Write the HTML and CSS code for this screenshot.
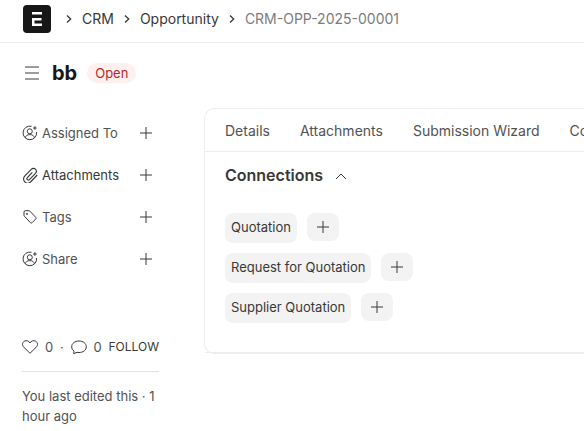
FILE: index.html
```html
<!DOCTYPE html>
<html lang="en">

<head>
    <meta charset="utf-8">
    <meta name="viewport" content="width=device-width, initial-scale=1.0">
    <title>CRM-OPP-2025-00001</title>
    <link rel="stylesheet" href="styles.css">
</head>

<body>
    <!-- shared icons -->
    <svg class="sprite" aria-hidden="true">
        <symbol id="icon-plus" viewBox="0 0 12 12">
            <path d="M6 0v12M0 6h12" />
        </symbol>
        <symbol id="icon-right" viewBox="0 0 6 8">
            <path d="M1 .5L4.700 4 1 7.500" />
        </symbol>
        <symbol id="icon-assign" viewBox="0 0 16 16">
            <path d="M9.500 1.300A6.800 6.800 0 1 0 14.600 7M12.900 1.200v3.600M11.100 3h3.600" />
            <circle cx="7.800" cy="6.300" r="2.500" />
            <path d="M3.300 12.800c.5-2.200 2-3.200 4.500-3.200s4.100 1 4.600 3.200" />
        </symbol>
        <symbol id="icon-clip" viewBox="0.500 0.500 14 14">
            <path d="M13.800 7.500l-5.400 5.700c-1.500 1.600-3.900 1.700-5.400.3s-1.500-3.700 0-5.200l5.600-5.800c1-1 2.600-1.100 3.600-.1s1.100 2.500.1 3.600l-5.300 5.500c-.5.5-1.300.6-1.800.1s-.5-1.300 0-1.800l4.300-4.600" />
        </symbol>
        <symbol id="icon-tag" viewBox="0 0 16 16">
            <path d="M2 6V3c0-.8.5-1.300 1.300-1.300h3.500c.4 0 .7.100 1 .4l5.900 6.200c.5.5.5 1.200 0 1.700l-3.600 3.700c-.5.5-1.200.5-1.700 0L2.400 7.200C2.100 6.900 2 6.500 2 6z" />
            <circle cx="5" cy="4.900" r=".6" />
        </symbol>
        <symbol id="icon-heart" viewBox="0 0 16 16">
            <path d="M8 14.300L1.500 7.800C-.2 6 .4 3.100 2.500 2.100 4.500 1.200 6.900 1.800 8 4c1.100-2.200 3.500-2.800 5.500-1.900 2.100 1 2.700 3.900 1 5.700z" />
        </symbol>
        <symbol id="icon-comment" viewBox="0 0 16 16">
            <path d="M3 12.100C1.400 11 .7 9.500.7 7.800.7 4.400 3.800 2 8 2s7.300 2.400 7.300 5.800-3.100 5.700-7.300 5.700c-.7 0-1.400-.1-2-.2l-3.200 1.400z" />
        </symbol>
    </svg>

    <header class="navbar">
        <a class="logo" href="#" aria-label="Home">
            <svg viewBox="0 0 28 28">
                <path d="M9 8.250h10M9 14.250h9.500M10.250 14v6M9 19.750h10" />
            </svg>
        </a>
        <nav class="breadcrumb">
            <svg class="sep"><use href="#icon-right" /></svg>
            <a href="#">CRM</a>
            <svg class="sep"><use href="#icon-right" /></svg>
            <a href="#">Opportunity</a>
            <svg class="sep"><use href="#icon-right" /></svg>
            <a class="current" href="#">CRM-OPP-2025-00001</a>
        </nav>
    </header>

    <div class="page-head">
        <button class="menu-btn" aria-label="Toggle sidebar">
            <svg viewBox="0 0 14 14"><path d="M0 1h14M0 7h14M0 13h14" /></svg>
        </button>
        <h1>bb</h1>
        <span class="indicator">Open</span>
    </div>

    <div class="layout">
        <aside class="sidebar">
            <ul class="side-menu">
                <li>
                    <svg class="icon"><use href="#icon-assign" /></svg>
                    <span>Assigned To</span>
                    <button class="add" aria-label="Assign"><svg><use href="#icon-plus" /></svg></button>
                </li>
                <li class="dark">
                    <svg class="icon"><use href="#icon-clip" /></svg>
                    <span>Attachments</span>
                    <button class="add" aria-label="Attach file"><svg><use href="#icon-plus" /></svg></button>
                </li>
                <li>
                    <svg class="icon"><use href="#icon-tag" /></svg>
                    <span>Tags</span>
                    <button class="add" aria-label="Add tag"><svg><use href="#icon-plus" /></svg></button>
                </li>
                <li>
                    <svg class="icon"><use href="#icon-assign" /></svg>
                    <span>Share</span>
                    <button class="add" aria-label="Share"><svg><use href="#icon-plus" /></svg></button>
                </li>
            </ul>

            <div class="stats">
                <button aria-label="Like"><svg class="icon"><use href="#icon-heart" /></svg><span>0</span></button>
                <span>·</span>
                <button aria-label="Comments"><svg class="icon"><use href="#icon-comment" /></svg><span>0</span></button>
                <button class="follow">FOLLOW</button>
            </div>

            <p class="edited">You last edited this · 1 hour ago</p>
        </aside>

        <main class="form">
            <nav class="tabs">
                <a href="#">Details</a>
                <a href="#">Attachments</a>
                <a href="#">Submission Wizard</a>
                <a href="#">Connections</a>
            </nav>
            <section class="section">
                <h2>Connections
                    <svg class="collapse" viewBox="0 0 12 7"><path d="M1 6l5-5 5 5" /></svg>
                </h2>
                <div class="links">
                    <div class="link-row">
                        <a class="badge" href="#">Quotation</a>
                        <button class="new" aria-label="New Quotation"><svg><use href="#icon-plus" /></svg></button>
                    </div>
                    <div class="link-row">
                        <a class="badge" href="#">Request for Quotation</a>
                        <button class="new" aria-label="New Request for Quotation"><svg><use href="#icon-plus" /></svg></button>
                    </div>
                    <div class="link-row">
                        <a class="badge" href="#">Supplier Quotation</a>
                        <button class="new" aria-label="New Supplier Quotation"><svg><use href="#icon-plus" /></svg></button>
                    </div>
                </div>
            </section>
        </main>
    </div>
</body>

</html>
```
FILE: styles.css
```css
* {
    box-sizing: border-box;
}

body {
    margin: 0;
    font-family: Inter, "Liberation Sans", sans-serif;
    font-size: 13px;
    line-height: 20px;
    color: #383838;
    background: #fff;
}

a {
    color: inherit;
    text-decoration: none;
}

button {
    display: flex;
    align-items: center;
    padding: 0;
    border: 0;
    background: none;
    color: inherit;
    font: inherit;
    cursor: pointer;
}

svg {
    display: block;
    flex: none;
    fill: none;
    stroke: #383838;
}

.sprite {
    position: absolute;
    width: 0;
    height: 0;
}

.icon {
    width: 16px;
    height: 16px;
}

/* top bar */
.navbar {
    display: flex;
    align-items: center;
    gap: 15px;
    padding: 5px 23px 9px;
    border-bottom: 1px solid #ededed;
}

.logo svg {
    width: 28px;
    height: 28px;
    border-radius: 4px;
    background: #171717;
    stroke: #fff;
    stroke-width: 2.5;
}

.breadcrumb {
    display: flex;
    align-items: center;
    gap: 10px;
    font-size: 14px;
    white-space: nowrap;
}

.sep {
    width: 6px;
    height: 8px;
    stroke-width: 1.3;
}

.breadcrumb .current {
    color: #7c7c7c;
}

/* title */
.page-head {
    display: flex;
    align-items: center;
    padding: 16px 25px 0;
}

.menu-btn svg {
    width: 14px;
    height: 14px;
    stroke: #7c7c7c;
    stroke-width: 1.4;
}

.page-head h1 {
    margin: 0 10px 0 13px;
    font-size: 20px;
    line-height: 28px;
    font-weight: 700;
    color: #171717;
}

.indicator {
    padding: 0 8px;
    border-radius: 10px;
    background: #fff0f0;
    color: #b52a2a;
}

/* columns */
.layout {
    display: flex;
    align-items: flex-start;
    gap: 45px;
    padding: 21px 0 0 22px;
}

.sidebar {
    flex: none;
    width: 137px;
    color: #525252;
}

.side-menu {
    margin: 0;
    padding: 15px 0 0;
    list-style: none;
}

.side-menu li {
    display: flex;
    align-items: center;
    gap: 4px;
    margin-bottom: 22px;
}

.side-menu .dark {
    color: #383838;
}

.add {
    margin: 0 7px 0 auto;
}

.add svg,
.new svg {
    width: 12px;
    height: 12px;
}

.stats {
    display: flex;
    align-items: center;
    justify-content: space-between;
    margin-top: 68px;
    padding-bottom: 14px;
    border-bottom: 1px solid #e2e2e2;
}

.stats button {
    gap: 7px;
}

.stats .follow {
    font-size: 12px;
    color: #383838;
}

.edited {
    margin: 14px 0 0;
}

/* form */
.form {
    flex: 1;
    min-width: 0;
    border: 1px solid #ededed;
    border-right: 0;
    border-radius: 10px 0 0 10px;
}

.tabs {
    display: flex;
    gap: 30px;
    padding: 12px 0 10px 20px;
    overflow: hidden;
    border-bottom: 1px solid #ededed;
    font-size: 14px;
    color: #525252;
    white-space: nowrap;
}

.section {
    padding: 13px 20px 29px;
    border-bottom: 1px solid #ededed;
}

.section h2 {
    display: flex;
    align-items: center;
    gap: 12px;
    margin: 0;
    font-size: 16px;
    line-height: 20px;
    font-weight: 600;
}

.collapse {
    width: 12px;
    height: 7px;
    margin-top: 3px;
}

.links {
    display: grid;
    gap: 10px;
    margin-top: 28px;
}

.link-row {
    display: flex;
    align-items: flex-start;
    gap: 10px;
}

.badge {
    padding: 4px 6px 6px;
    border-radius: 8px;
    background: #f3f3f3;
}

.new {
    padding: 8px 10px;
    border-radius: 8px;
    background: #f3f3f3;
}
```
